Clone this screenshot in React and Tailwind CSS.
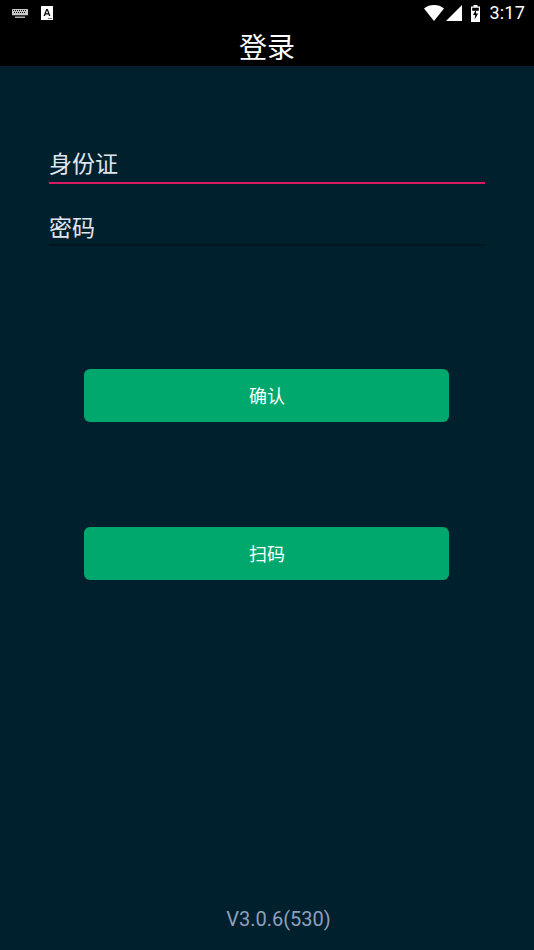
const cjk = { fontFamily: '"Noto Sans CJK SC", Roboto, sans-serif' };

function StatusBar() {
  return (
    <div className="h-[26px] flex items-center justify-between pl-[12px] pr-[9px] bg-black">
      <div className="flex items-center gap-[13px]">
        <svg width="16" height="9" viewBox="0 0 16 9">
          <rect x="0" y="0" width="16" height="6.5" rx="0.5" fill="#c9c9c9" />
          <g fill="#000">
            <rect x="1" y="1" width="1" height="1" /><rect x="3" y="1" width="1" height="1" /><rect x="5" y="1" width="1" height="1" /><rect x="7" y="1" width="1" height="1" /><rect x="9" y="1" width="1" height="1" /><rect x="11" y="1" width="1" height="1" /><rect x="13" y="1" width="1" height="1" />
            <rect x="2" y="3" width="1" height="1" /><rect x="4" y="3" width="1" height="1" /><rect x="6" y="3" width="1" height="1" /><rect x="8" y="3" width="1" height="1" /><rect x="10" y="3" width="1" height="1" /><rect x="12" y="3" width="1" height="1" />
            <rect x="0" y="6.5" width="16" height="1" />
          </g>
          <rect x="3" y="7.5" width="10" height="1.5" fill="#a8a8a8" />
        </svg>
        <svg width="12" height="14" viewBox="0 0 12 14">
          <rect width="12" height="14" rx="0.5" fill="#fff" />
          <path d="M2.6 10 5.2 3h1.6l2.6 7H8l-.5-1.5h-3L4 10zM4.9 7.3h2.2L6 4.2z" fill="#000" />
          <rect x="7" y="12" width="4" height="1" fill="#777" />
        </svg>
      </div>
      <div className="flex items-center">
        <svg width="20" height="16" viewBox="0 0 20 16">
          <path d="M0 3.4C2.8 1.1 6.2 0 10 0s7.2 1.1 10 3.4L10 16z" fill="#fff" />
        </svg>
        <svg className="ml-[2px]" width="16" height="16" viewBox="0 0 16 16">
          <path d="M16 0v16H0z" fill="#fff" />
        </svg>
        <svg className="ml-[9px]" width="9" height="17" viewBox="0 0 9 17">
          <path fillRule="evenodd" d="M2.5 0h4v1.5H9V17H0V1.5h2.5zM1.2 2.8v3h6.6v-3z" fill="#fff" />
          <path d="M5.4 4 2 10h2.2l-.6 4.6L7.2 8.4H4.9z" fill="#000" />
        </svg>
        <span className="ml-[9px] text-[18px] leading-[26px] text-white tracking-[0.2px]" style={{ fontFamily: 'Roboto, sans-serif' }}>3:17</span>
      </div>
    </div>
  );
}

function Field({ label, className, lineClass }) {
  return (
    <div className={className}>
      <div className="text-[23px] leading-[27px] pb-[5px] text-[#e1e6ee]" style={cjk}>{label}</div>
      <div className={lineClass} />
    </div>
  );
}

function Btn({ children, className }) {
  return (
    <button className={`block ml-[84px] w-[365px] h-[53px] pl-[1px] rounded-[6px] bg-[#00a86e] text-white text-[18px] ${className}`} style={cjk}>
      {children}
    </button>
  );
}

export default function App() {
  return (
    <div className="w-[534px] h-[950px] flex flex-col bg-[#00202e] overflow-hidden">
      <StatusBar />
      <div className="h-[40px] bg-black flex items-center justify-center text-white text-[28px] leading-[40px]" style={cjk}>登录</div>
      <div className="flex-1 flex flex-col">
        <div className="px-[49px] pt-[83px]">
          <Field label="身份证" lineClass="h-[2px] bg-[#d81b60] w-[436px] mt-[1px]" />
          <Field label="密码" className="mt-[29px]" lineClass="h-[2px] bg-[#001620] w-[436px] -mt-[1px]" />
        </div>
        <Btn className="mt-[123px]">确认</Btn>
        <Btn className="mt-[105px]">扫码</Btn>
        <div className="mt-auto mb-[18px] pl-[23px] text-center text-[20px] leading-[26px] text-[#8f9fbc]" style={{ fontFamily: 'Roboto, sans-serif' }}>V3.0.6(530)</div>
      </div>
    </div>
  );
}
